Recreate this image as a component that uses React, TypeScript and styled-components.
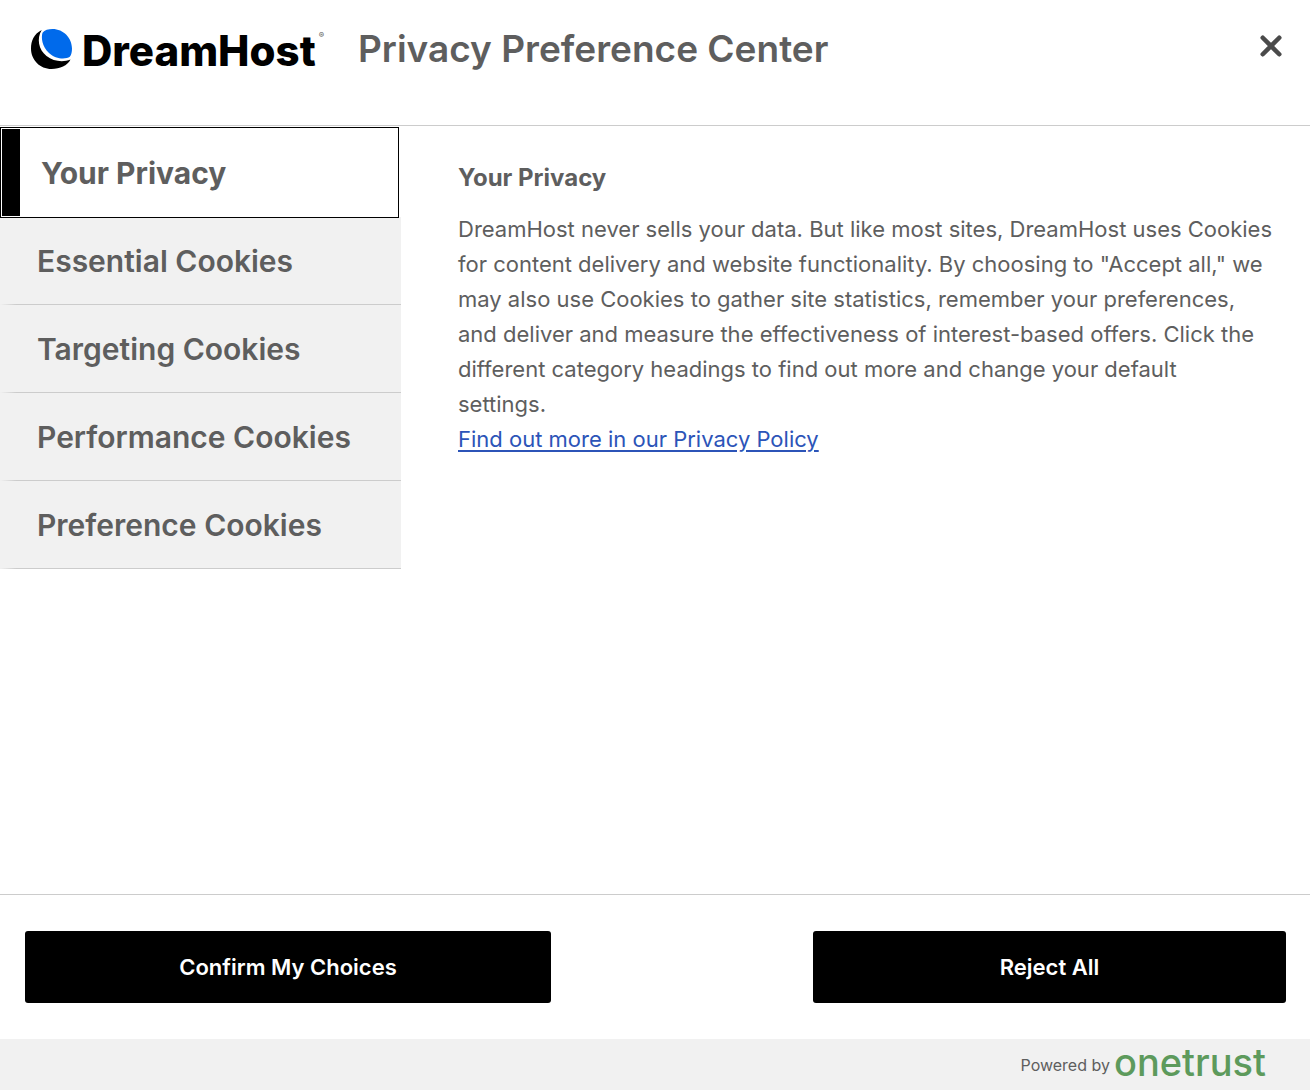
import React, { useState } from "react";
import styled, { createGlobalStyle } from "styled-components";

const GlobalStyle = createGlobalStyle`
  *, *::before, *::after { box-sizing: border-box; }
  body {
    margin: 0;
    background: #fff;
    color: #5e5e5e;
    font-family: Inter, "Liberation Sans", sans-serif;
  }
`;

const Page = styled.div`
  display: flex;
  flex-direction: column;
  min-height: 100vh;
`;

const Header = styled.header`
  display: flex;
  align-items: flex-start;
  padding: 20px 24px 47px 30px;
  border-bottom: 1px solid #ccc;
`;

const Logo = styled.div`
  display: flex;
  align-items: center;
  gap: 9px;
  width: 328px;
  height: 58px;
  color: #000;
`;

const LogoName = styled.span`
  padding-top: 4px;
  font-size: 42px;
  font-weight: 800;
  line-height: 58px;
`;

const Registered = styled.sup`
  align-self: flex-start;
  margin-left: -6px;
  padding-top: 10px;
  color: #555;
  font-size: 8px;
  line-height: 10px;
`;

const Title = styled.h1`
  flex: 1;
  margin: 0;
  font-size: 37px;
  font-weight: 600;
  line-height: 58px;
`;

const CloseButton = styled.button`
  display: flex;
  align-items: center;
  justify-content: center;
  width: 30px;
  height: 52px;
  padding: 0;
  border: 0;
  background: none;
  color: #4a4a4a;
  cursor: pointer;
`;

const Body = styled.main`
  display: flex;
  flex: 1;
`;

const TabList = styled.div`
  display: flex;
  flex-direction: column;
  flex: 0 0 401px;
  padding-top: 1px;
`;

const Tab = styled.button<{ $active: boolean }>`
  position: relative;
  z-index: ${(p) => (p.$active ? 1 : 0)};
  height: ${(p) => (p.$active ? 91 : 88)}px;
  margin: ${(p) => (p.$active ? "0 2px -1px 0" : "0")};
  padding: ${(p) => (p.$active ? "0 0 0 40px" : "0 0 1px 37px")};
  border: ${(p) => (p.$active ? "1px solid #000" : "0")};
  background: ${(p) =>
    p.$active
      ? "linear-gradient(#000, #000) 1px 1px / 18px calc(100% - 2px) no-repeat #fff"
      : "linear-gradient(to right, #f1f1f1, #ccc 16px) bottom / 100% 1px no-repeat #f1f1f1"};
  color: #5e5e5e;
  font: inherit;
  font-size: 30px;
  font-weight: ${(p) => (p.$active ? 700 : 600)};
  text-align: left;
  cursor: pointer;
`;

const Panel = styled.section`
  flex: 1;
  min-width: 0;
  padding: 34px 32px 34px 57px;
`;

const PanelTitle = styled.h2`
  margin: 0 0 17px;
  font-size: 24px;
  font-weight: 700;
  line-height: 35px;
`;

const PanelText = styled.p`
  margin: 0;
  font-size: 22px;
  line-height: 35px;
`;

const PolicyLink = styled.a`
  color: #2c54b8;
  text-underline-offset: 3px;
  text-decoration-thickness: 2px;
`;

const Actions = styled.div`
  display: flex;
  justify-content: space-between;
  padding: 36px 24px 36px 25px;
  border-top: 1px solid #ccc;
`;

const ActionButton = styled.button<{ $width: string }>`
  width: ${(p) => p.$width};
  height: 72px;
  border: 0;
  border-radius: 3px;
  background: #000;
  color: #fff;
  font: inherit;
  font-size: 22px;
  font-weight: 600;
  cursor: pointer;
`;

const Footer = styled.footer`
  display: flex;
  justify-content: flex-end;
  align-items: flex-start;
  gap: 4px;
  height: 51px;
  padding-right: 44px;
  background: #f1f1f1;
`;

const Powered = styled.span`
  font-size: 16px;
  line-height: 52px;
`;

const Vendor = styled.a`
  color: #5d9a5c;
  font-size: 38px;
  font-weight: 500;
  line-height: 46px;
  text-decoration: none;
`;

const tabs = [
  "Your Privacy",
  "Essential Cookies",
  "Targeting Cookies",
  "Performance Cookies",
  "Preference Cookies",
];

export default function App() {
  const [active, setActive] = useState(tabs[0]);

  return (
    <Page>
      <GlobalStyle />
      <Header>
        <Logo>
          <svg width="43" height="42" viewBox="0 0 43 42" aria-hidden="true">
            <path
              fill="#000"
              d="M11.7 2C3.7 6 1 13 1 20.500C1 32 10 41 21.500 41C30 41 37.500 37.500 40.500 31.500C33 34.500 23.500 33.500 16.500 28C8.500 21.500 6.500 10.500 11.700 2Z"
            />
            <path
              fill="#006aeb"
              d="M12.500 4.800C14.500 2 18.500 1 22.500 1C33.500 1 42 10 42 20.500C42 24 41.300 27 39.800 28.800C36 31.500 25.500 31.500 19 25C12 18.500 11 9.500 12.500 4.800Z"
            />
          </svg>
          <LogoName>DreamHost</LogoName>
          <Registered>®</Registered>
        </Logo>
        <Title>Privacy Preference Center</Title>
        <CloseButton type="button" aria-label="Close">
          <svg width="22" height="22" viewBox="0 0 24 24" aria-hidden="true">
            <path d="M3 3L21 21M21 3L3 21" stroke="currentColor" strokeWidth="5" strokeLinecap="round" />
          </svg>
        </CloseButton>
      </Header>
      <Body>
        <TabList role="tablist" aria-label="Cookie categories">
          {tabs.map((name) => (
            <Tab
              key={name}
              type="button"
              role="tab"
              aria-selected={name === active}
              $active={name === active}
              onClick={() => setActive(name)}
            >
              {name}
            </Tab>
          ))}
        </TabList>
        <Panel role="tabpanel" aria-label={active}>
          <PanelTitle>{active}</PanelTitle>
          <PanelText>
            DreamHost never sells your data. But like most sites, DreamHost uses Cookies for content
            delivery and website functionality. By choosing to "Accept all," we may also use Cookies to
            gather site statistics, remember your preferences, and deliver and measure the effectiveness
            of interest-based offers. Click the different category headings to find out more and change
            your default
            <br />
            settings.
            <br />
            <PolicyLink href="#privacy-policy">Find out more in our Privacy Policy</PolicyLink>
          </PanelText>
        </Panel>
      </Body>
      <Actions>
        <ActionButton type="button" $width="526px">Confirm My Choices</ActionButton>
        <ActionButton type="button" $width="473px">Reject All</ActionButton>
      </Actions>
      <Footer>
        <Powered>Powered by</Powered>
        <Vendor href="#onetrust">onetrust</Vendor>
      </Footer>
    </Page>
  );
}
